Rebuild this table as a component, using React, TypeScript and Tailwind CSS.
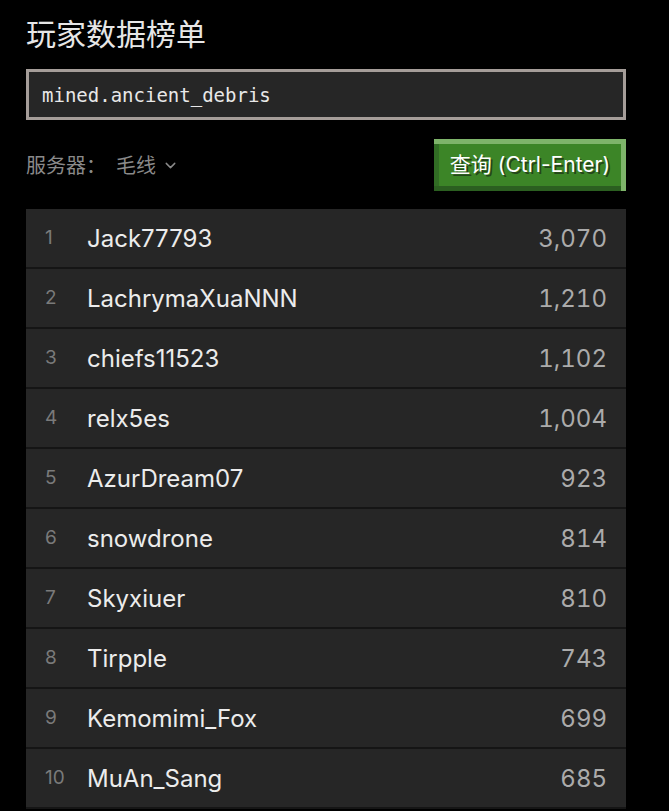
import { ChevronDown } from "lucide-react";

const rows = [
  { name: "Jack77793", value: "3,070" },
  { name: "LachrymaXuaNNN", value: "1,210" },
  { name: "chiefs11523", value: "1,102" },
  { name: "relx5es", value: "1,004" },
  { name: "AzurDream07", value: "923" },
  { name: "snowdrone", value: "814" },
  { name: "Skyxiuer", value: "810" },
  { name: "Tirpple", value: "743" },
  { name: "Kemomimi_Fox", value: "699" },
  { name: "MuAn_Sang", value: "685" },
];

const sans = "font-['Inter','Noto_Sans_CJK_SC',sans-serif]";

const App = () => {
  return (
    <div className={`min-h-[811px] bg-black ${sans}`}>
      <div className="w-[600px] ml-[26px] pt-[12px]">
        {/* Title */}
        <h1 className="text-[30px] leading-[40px] text-[#e6e6e6] font-['Noto_Sans_CJK_SC',sans-serif]">
          玩家数据榜单
        </h1>

        {/* Query input */}
        <div className="mt-[17px] h-[51px] border-[3px] border-[#a59d99] bg-[#262626] flex items-center pl-[13px] pt-[1px]">
          <span className="font-['DejaVu_Sans_Mono',monospace] text-[19px] text-[#e8e8e8]">
            mined.ancient_debris
          </span>
        </div>

        {/* Server + button */}
        <div className="mt-[19px] flex items-center justify-between">
          <div className="flex items-center text-[20px] text-[#8a8a8a] font-['Noto_Sans_CJK_SC',sans-serif]">
            <span>服务器：</span>
            <span className="ml-[10px]">毛线</span>
            <ChevronDown className="ml-[6px] w-[17px] h-[17px]" strokeWidth={2} />
          </div>
          <button className="h-[52px] w-[192px] bg-[#3c8527] text-white text-[21px] shadow-[inset_0_5px_0_#7eb46a,inset_-5px_0_0_#7eb46a,inset_0_-5px_0_#2b5f20,inset_5px_0_0_#316d24] [text-shadow:2px_2px_0_#24461a] pb-[1px]">
            查询 (Ctrl-Enter)
          </button>
        </div>

        {/* Leaderboard */}
        <div className="mt-[18px] flex flex-col">
          {rows.map((row, i) => (
            <div
              key={i}
              className="h-[60px] bg-[#262626] border-b-[2px] border-[#151515] flex items-center pl-[19px] pr-[19px] pt-[1px]"
            >
              <span className="w-[42px] text-[19px] text-[#7a7a7a]">{i + 1}</span>
              <span className="flex-1 text-[24px] text-[#ececec]">{row.name}</span>
              <span className="text-[24px] text-[#ababab] tabular-nums">{row.value}</span>
            </div>
          ))}
        </div>
      </div>
    </div>
  );
};

export default App;
